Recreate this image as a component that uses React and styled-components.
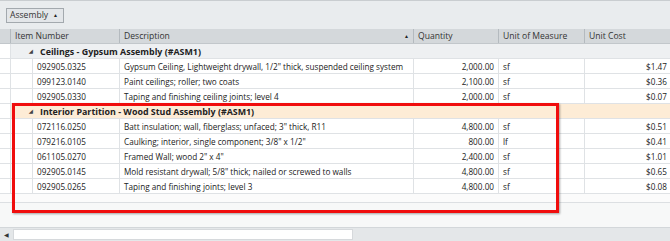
import React from 'react';
import styled, { createGlobalStyle } from 'styled-components';

const Global = createGlobalStyle`
  html, body { margin: 0; padding: 0; background: #f7f8f8; }
  body { font-family: "Open Sans", "Noto Sans", sans-serif; font-size: 8.2px; color: #222; }
`;

const COLS = [11, 22, 87, 294, 85, 86, 85];

const Frame = styled.div`
  position: relative;
  width: 670px;
  height: 241px;
  overflow: hidden;
  display: flex;
  flex-direction: column;
  border-top: 1px solid #c9cdd0;
  box-sizing: border-box;
`;

const GroupPanel = styled.div`
  height: 28px;
  background: #e9ecee;
  display: flex;
  align-items: center;
  padding-left: 6px;
  box-sizing: border-box;
`;

const GroupChip = styled.div`
  height: 15px;
  width: 58px;
  border: 1px solid #a3a9ae;
  background: #e3e6e9;
  display: flex;
  align-items: center;
  justify-content: space-between;
  padding: 0 5px 0 3px;
  box-sizing: border-box;
  color: #333;
  font-size: 8.6px;
`;

const Arrow = styled.span`
  font-size: 5px;
  color: #222;
`;

const HeaderRow = styled.div`
  display: flex;
  height: 15px;
  background: #d4d8db;
  border-bottom: 1px solid #c2c7cb;
  box-sizing: border-box;
  font-size: 8.6px;
`;

const HeadCell = styled.div`
  width: ${p => p.$w}px;
  flex: none;
  display: flex;
  align-items: center;
  justify-content: space-between;
  padding: 0 4px;
  box-sizing: border-box;
  border-right: 1px solid #b4babf;
  color: #333;
  &:last-child { border-right: none; }
`;

const Body = styled.div`
  flex: 1;
  display: flex;
  flex-direction: column;
  background: #f7f8f8;
`;

const Row = styled.div`
  display: flex;
  height: 15px;
  background: #fff;
  border-bottom: 1px solid #dfe2e5;
  box-sizing: border-box;
`;

const GroupRow = styled.div`
  display: flex;
  align-items: center;
  height: 15px;
  background: ${p => (p.$active ? '#fdecd6' : '#eef0f2')};
  border-bottom: 1px solid #dfe2e5;
  box-sizing: border-box;
  font-weight: 700;
  font-size: 8.9px;
  color: #222;
`;

const GroupLead = styled.div`
  width: 11px;
  height: 100%;
  flex: none;
  background: #fff;
  border-right: 1px solid #dfe2e5;
  box-sizing: border-box;
`;

const Expander = styled.span`
  width: 29px;
  flex: none;
  text-align: right;
  padding-right: 7px;
  box-sizing: border-box;
  font-size: 5px;
  color: #444;
`;

const Cell = styled.div`
  width: ${p => p.$w}px;
  flex: none;
  display: flex;
  align-items: center;
  justify-content: ${p => (p.$right ? 'flex-end' : 'flex-start')};
  padding: 0 4px;
  box-sizing: border-box;
  border-right: 1px solid #dfe2e5;
  white-space: nowrap;
  overflow: hidden;
  &:last-child { border-right: none; padding-right: 3px; }
`;

const FooterRow = styled.div`
  height: 8px;
  background: #fbfbfb;
  border-bottom: 1px solid #dcdfe2;
`;

const Scrollbar = styled.div`
  height: 14px;
  background: #e4e7e9;
  border-top: 1px solid #d3d7da;
  display: flex;
  align-items: center;
  box-sizing: border-box;
`;

const ScrollBtn = styled.span`
  width: 13px;
  text-align: center;
  font-size: 6px;
  color: #333;
`;

const Thumb = styled.div`
  width: 340px;
  height: 11px;
  background: #fff;
  border: 1px solid #d6d9dc;
  box-sizing: border-box;
`;

const Highlight = styled.div`
  position: absolute;
  left: 12px;
  top: 102px;
  width: 547px;
  height: 110px;
  border: 3px solid #f00d0d;
  box-sizing: border-box;
  box-shadow: 1px 1px 2px rgba(0, 0, 0, 0.35);
  pointer-events: none;
`;

const groups = [
  {
    title: 'Ceilings - Gypsum Assembly (#ASM1)',
    items: [
      ['092905.0325', 'Gypsum Ceiling, Lightweight drywall, 1/2" thick, suspended ceiling system', '2,000.00', 'sf', '$1.47'],
      ['099123.0140', 'Paint ceilings; roller; two coats', '2,100.00', 'sf', '$0.36'],
      ['092905.0330', 'Taping and finishing ceiling joints; level 4', '2,000.00', 'sf', '$0.07'],
    ],
  },
  {
    title: 'Interior Partition - Wood Stud Assembly (#ASM1)',
    active: true,
    items: [
      ['072116.0250', 'Batt insulation; wall, fiberglass; unfaced; 3" thick, R11', '4,800.00', 'sf', '$0.51'],
      ['079216.0105', 'Caulking; interior, single component; 3/8" x 1/2"', '800.00', 'lf', '$0.41'],
      ['061105.0270', 'Framed Wall; wood 2" x 4"', '2,400.00', 'sf', '$1.01'],
      ['092905.0145', 'Mold resistant drywall; 5/8" thick; nailed or screwed to walls', '4,800.00', 'sf', '$0.65'],
      ['092905.0265', 'Taping and finishing joints; level 3', '4,800.00', 'sf', '$0.08'],
    ],
  },
];

export default function App() {
  return (
    <>
      <Global />
      <Frame>
        <GroupPanel>
          <GroupChip>
            <span>Assembly</span>
            <Arrow>▲</Arrow>
          </GroupChip>
        </GroupPanel>
        <HeaderRow>
          <HeadCell $w={COLS[0]} />
          <HeadCell $w={COLS[1] + COLS[2]}>Item Number</HeadCell>
          <HeadCell $w={COLS[3]}>
            <span>Description</span>
            <Arrow>▲</Arrow>
          </HeadCell>
          <HeadCell $w={COLS[4]}>Quantity</HeadCell>
          <HeadCell $w={COLS[5]}>Unit of Measure</HeadCell>
          <HeadCell $w={COLS[6]}>Unit Cost</HeadCell>
        </HeaderRow>
        <Body>
          {groups.map(g => (
            <React.Fragment key={g.title}>
              <GroupRow $active={g.active}>
                <GroupLead />
                <Expander>◢</Expander>
                <span>{g.title}</span>
              </GroupRow>
              {g.items.map(it => (
                <Row key={it[0]}>
                  <Cell $w={COLS[0]} />
                  <Cell $w={COLS[1]} />
                  <Cell $w={COLS[2]}>{it[0]}</Cell>
                  <Cell $w={COLS[3]}>{it[1]}</Cell>
                  <Cell $w={COLS[4]} $right>{it[2]}</Cell>
                  <Cell $w={COLS[5]}>{it[3]}</Cell>
                  <Cell $w={COLS[6]} $right>{it[4]}</Cell>
                </Row>
              ))}
            </React.Fragment>
          ))}
          <FooterRow />
        </Body>
        <Scrollbar>
          <ScrollBtn>◀</ScrollBtn>
          <Thumb />
        </Scrollbar>
        <Highlight />
      </Frame>
    </>
  );
}
